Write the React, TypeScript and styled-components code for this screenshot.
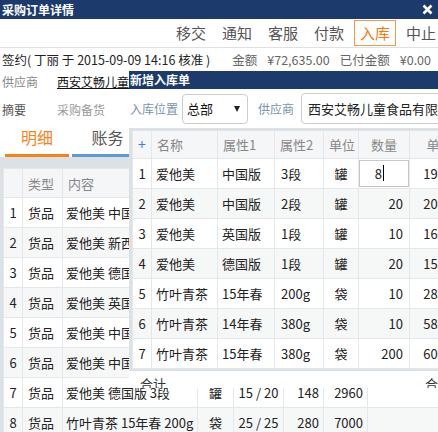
import styled, { createGlobalStyle } from 'styled-components'

const navy = '#1c3b6c'
const orange = '#f2851a'
const blue = '#5b9bd5'
const frame = '#dce1e6'
const grid = '#e4e8eb'

const GlobalStyle = createGlobalStyle`
	html, body {
		margin: 0;
		padding: 0;
	}
	body {
		font-family: 'Noto Sans CJK SC', sans-serif;
		font-size: 13px;
		color: #222;
		background: #fff;
		overflow: hidden;
	}
	* {
		box-sizing: border-box;
	}
`

const orderRows = [
	{ type: '货品', content: '爱他美 中国版 3段', unit: '罐', qty: '8 / 20', price: '198', sum: '3960' },
	{ type: '货品', content: '爱他美 新西兰版 2段', unit: '罐', qty: '20 / 20', price: '208', sum: '4160' },
	{ type: '货品', content: '爱他美 德国版 1段', unit: '罐', qty: '10 / 20', price: '168', sum: '3360' },
	{ type: '货品', content: '爱他美 英国版 1段', unit: '罐', qty: '20 / 20', price: '158', sum: '3160' },
	{ type: '货品', content: '爱他美 中国版 2段', unit: '罐', qty: '10 / 30', price: '208', sum: '6240' },
	{ type: '货品', content: '爱他美 中国版 1段', unit: '罐', qty: '10 / 20', price: '188', sum: '3760' },
	{ type: '货品', content: '爱他美 德国版 3段', unit: '罐', qty: '15 / 20', price: '148', sum: '2960' },
	{ type: '货品', content: '竹叶青茶 15年春 200g', unit: '袋', qty: '25 / 25', price: '280', sum: '7000' },
]

const stockRows = [
	{ name: '爱他美', attr1: '中国版', attr2: '3段', unit: '罐', qty: '8', price: '198.00' },
	{ name: '爱他美', attr1: '中国版', attr2: '2段', unit: '罐', qty: '20', price: '208.00' },
	{ name: '爱他美', attr1: '英国版', attr2: '1段', unit: '罐', qty: '10', price: '168.00' },
	{ name: '爱他美', attr1: '德国版', attr2: '1段', unit: '罐', qty: '20', price: '158.00' },
	{ name: '竹叶青茶', attr1: '15年春', attr2: '200g', unit: '袋', qty: '10', price: '280.00' },
	{ name: '竹叶青茶', attr1: '14年春', attr2: '380g', unit: '袋', qty: '10', price: '580.00' },
	{ name: '竹叶青茶', attr1: '15年春', attr2: '380g', unit: '袋', qty: '200', price: '600.00' },
]

export default function App() {
	return (
		<Page>
			<GlobalStyle />
			<TitleBar>
				<span>采购订单详情</span>
				<svg width='11' height='11' viewBox='0 0 11 11'>
					<path d='M1.5 1.5 L9.5 9.5 M9.5 1.5 L1.5 9.5' stroke='#fff' strokeWidth='2.6' />
				</svg>
			</TitleBar>
			<Toolbar>
				<ToolButton>移交</ToolButton>
				<ToolButton>通知</ToolButton>
				<ToolButton>客服</ToolButton>
				<ToolButton>付款</ToolButton>
				<ToolButton $active>入库</ToolButton>
				<ToolButton>中止</ToolButton>
			</Toolbar>
			<InfoRow>
				<span>签约( 丁丽 于 2015-09-09 14:16 核准 )</span>
				<Money>
					<span>金额</span>
					<span>¥72,635.00</span>
					<span>已付金额</span>
					<span>¥0.00</span>
				</Money>
			</InfoRow>
			<Fields>
				<FieldRow>
					<FieldLabel>供应商</FieldLabel>
					<SupplierLink>西安艾畅儿童食品有限公司</SupplierLink>
				</FieldRow>
				<FieldRow>
					<FieldLabel $dark>摘要</FieldLabel>
					<FieldValue>采购备货</FieldValue>
				</FieldRow>
			</Fields>
			<Tabs>
				<Tab $w={64} $color={orange} $active>明细</Tab>
				<Tab $w={71} $color={blue}>账务</Tab>
			</Tabs>
			<TableWrap>
				<OrderTable>
					<colgroup>
						<col width='19' />
						<col width='40' />
						<col width='135' />
						<col width='36' />
						<col width='50' />
						<col width='40' />
						<col width='44' />
						<col width='200' />
					</colgroup>
					<thead>
						<tr>
							<Th />
							<Th>类型</Th>
							<Th>内容</Th>
							<Th>单位</Th>
							<Th>数量</Th>
							<Th>单价</Th>
							<Th>金额</Th>
							<Th>备注</Th>
						</tr>
					</thead>
					<tbody>
						{orderRows.map((r, i) => (
							<BodyRow key={i}>
								<Td $align='center'>{i + 1}</Td>
								<Td $pad={5}>{r.type}</Td>
								<Td $pad={3}>{r.content}</Td>
								<Td $align='center'>{r.unit}</Td>
								<Td $align='center'>{r.qty}</Td>
								<Td $align='right'>{r.price}</Td>
								<Td $align='right'>{r.sum}</Td>
								<Td />
							</BodyRow>
						))}
					</tbody>
				</OrderTable>
			</TableWrap>

			<Dialog>
				<DialogTitle>新增入库单</DialogTitle>
				<FormRow>
					<FormLabel>入库位置</FormLabel>
					<SelectBox>
						<span>总部</span>
						<Caret />
					</SelectBox>
					<FormLabel $gap>供应商</FormLabel>
					<TextBox>西安艾畅儿童食品有限公司</TextBox>
				</FormRow>
				<ItemWrap>
					<ItemTable>
						<colgroup>
							<col width='19' />
							<col width='66' />
							<col width='57' />
							<col width='49' />
							<col width='35' />
							<col width='51' />
							<col width='60' />
							<col width='80' />
						</colgroup>
						<thead>
							<tr>
								<ItemTh $align='center'>
									<Plus>+</Plus>
								</ItemTh>
								<ItemTh>名称</ItemTh>
								<ItemTh>属性1</ItemTh>
								<ItemTh>属性2</ItemTh>
								<ItemTh $align='center'>单位</ItemTh>
								<ItemTh $align='center'>数量</ItemTh>
								<ItemTh $align='center'>单价</ItemTh>
								<ItemTh $align='center'>金额</ItemTh>
							</tr>
						</thead>
						<tbody>
							{stockRows.map((r, i) => (
								<ItemRow key={i}>
									<ItemTd $align='center'>{i + 1}</ItemTd>
									<ItemTd>{r.name}</ItemTd>
									<ItemTd>{r.attr1}</ItemTd>
									<ItemTd $pad={6}>{r.attr2}</ItemTd>
									<ItemTd $align='center'>{r.unit}</ItemTd>
									{i === 0 ? (
										<QtyCell>
											<QtyInput>
												{r.qty}
												<TextCaret />
											</QtyInput>
										</QtyCell>
									) : (
										<ItemTd $align='right' $pad={6}>
											{r.qty}
										</ItemTd>
									)}
									<ItemTd $align='right' $pad={6}>
										{r.price}
									</ItemTd>
									<ItemTd />
								</ItemRow>
							))}
						</tbody>
					</ItemTable>
				</ItemWrap>
				<DialogFooter>
					<span>合计</span>
					<span>合计金额</span>
				</DialogFooter>
			</Dialog>
		</Page>
	)
}

const Page = styled.div`
	position: relative;
	width: 438px;
	height: 432px;
	overflow: hidden;
	display: flex;
	flex-direction: column;
`

const TitleBar = styled.div`
	flex-shrink: 0;
	height: 19px;
	padding: 0 5px 0 2px;
	display: flex;
	align-items: center;
	justify-content: space-between;
	background: ${navy};
	color: #fff;
	font-size: 12px;
	font-weight: 700;
`

const Toolbar = styled.div`
	flex-shrink: 0;
	height: 29px;
	padding-top: 1px;
	margin-right: -4px;
	display: flex;
	justify-content: flex-end;
	align-items: flex-start;
	gap: 4px;
	border-bottom: 1px solid #e1e1e1;
`

const ToolButton = styled.button<{ $active?: boolean }>`
	height: 26px;
	padding: 0 5px;
	border: 1px solid ${(p) => (p.$active ? '#f39a45' : 'transparent')};
	background: #fff;
	font-family: inherit;
	font-size: 15px;
	line-height: 24px;
	color: ${(p) => (p.$active ? '#f07a15' : '#555')};
`

const InfoRow = styled.div`
	flex-shrink: 0;
	height: 22px;
	padding: 0 7px 0 2px;
	display: flex;
	align-items: center;
	justify-content: space-between;
	font-size: 12.5px;
	color: #222;
	white-space: nowrap;
`

const Money = styled.div`
	display: flex;
	gap: 10px;
	font-size: 12.5px;
	color: #666;
`

const Fields = styled.div`
	flex-shrink: 0;
	display: flex;
	flex-direction: column;
	gap: 6px;
`

const FieldRow = styled.div`
	height: 22px;
	padding-left: 2px;
	display: grid;
	grid-template-columns: 55px auto;
	align-items: center;
	font-size: 12px;
	white-space: nowrap;
`

const FieldLabel = styled.span<{ $dark?: boolean }>`
	color: ${(p) => (p.$dark ? '#555' : '#888')};
`

const SupplierLink = styled.a`
	color: #111;
	text-decoration: underline;
`

const FieldValue = styled.span`
	color: #999;
`

const Tabs = styled.div`
	flex-shrink: 0;
	height: 37px;
	padding-left: 5px;
	display: flex;
	gap: 3px;
`

const Tab = styled.div<{ $w: number; $color: string; $active?: boolean }>`
	width: ${(p) => p.$w}px;
	display: flex;
	align-items: center;
	justify-content: center;
	border-bottom: 3px solid ${(p) => p.$color};
	font-size: 16px;
	color: ${(p) => (p.$active ? orange : '#555')};
`

const TableWrap = styled.div`
	flex: 1;
	padding: 11px 0 0 3px;
	background: ${frame};
`

const OrderTable = styled.table`
	width: 564px;
	table-layout: fixed;
	border-collapse: collapse;
	background: #fff;
	font-size: 13px;
`

const Th = styled.th`
	height: 29px;
	padding: 0 5px;
	border: 1px solid ${grid};
	background: #f5f6f7;
	color: #888;
	font-weight: 400;
	text-align: left;
	white-space: nowrap;
	overflow: hidden;
`

const BodyRow = styled.tr`
	height: 30px;
	&:nth-child(even) {
		background: #f6f7f7;
	}
`

const Td = styled.td<{ $align?: string; $pad?: number }>`
	padding: 0 ${(p) => p.$pad ?? 4}px;
	border: 1px solid ${grid};
	text-align: ${(p) => p.$align ?? 'left'};
	white-space: nowrap;
	overflow: hidden;
	color: #222;
`

const Dialog = styled.div`
	position: absolute;
	top: 71px;
	left: 129px;
	width: 430px;
	height: 317px;
	overflow: hidden;
	display: flex;
	flex-direction: column;
	background: #fff;
`

const DialogTitle = styled.div`
	flex-shrink: 0;
	height: 18px;
	padding-left: 1px;
	background: ${navy};
	color: #fff;
	font-size: 12px;
	font-weight: 700;
	line-height: 18px;
`

const FormRow = styled.div`
	flex-shrink: 0;
	height: 39px;
	padding: 4px 0 4px 1px;
	display: flex;
	align-items: center;
	white-space: nowrap;
`

const FormLabel = styled.span<{ $gap?: boolean }>`
	margin: 0 ${(p) => (p.$gap ? 7 : 4)}px 0 ${(p) => (p.$gap ? 10 : 0)}px;
	font-size: 12px;
	color: #7b93ab;
`

const SelectBox = styled.div`
	width: 66px;
	height: 30px;
	padding: 0 7px 0 4px;
	display: flex;
	align-items: center;
	justify-content: space-between;
	border: 1px solid #ccc;
	border-radius: 4px;
	font-size: 13px;
	color: #111;
`

const Caret = styled.span`
	width: 0;
	height: 0;
	border-left: 3px solid transparent;
	border-right: 3px solid transparent;
	border-top: 6px solid #222;
`

const TextBox = styled.div`
	flex: 1;
	height: 31px;
	padding-left: 6px;
	display: flex;
	align-items: center;
	overflow: hidden;
	border: 1px solid #ccc;
	border-radius: 4px;
	font-size: 13px;
	color: #222;
`

const ItemWrap = styled.div`
	flex-shrink: 0;
	border-top: 3px solid ${frame};
	border-left: 3px solid ${frame};
	border-bottom: 2px solid ${frame};
`

const ItemTable = styled.table`
	width: 417px;
	table-layout: fixed;
	border-collapse: collapse;
	font-size: 13px;
`

const ItemTh = styled.th<{ $align?: string }>`
	height: 27px;
	padding: 0 5px;
	border: 1px solid ${grid};
	border-top: none;
	background: #f5f6f7;
	color: #888;
	font-weight: 400;
	text-align: ${(p) => p.$align ?? 'left'};
	white-space: nowrap;
	overflow: hidden;
`

const Plus = styled.span`
	color: #3d7fcf;
	font-size: 14px;
`

const ItemRow = styled.tr`
	height: 30px;
	&:nth-child(even) {
		background: #f6f7f7;
	}
`

const ItemTd = styled.td<{ $align?: string; $pad?: number }>`
	padding: 0 ${(p) => p.$pad ?? 4}px;
	border: 1px solid ${grid};
	text-align: ${(p) => p.$align ?? 'left'};
	white-space: nowrap;
	overflow: hidden;
	color: #222;
`

const QtyCell = styled.td`
	padding: 1px 0;
	border: 1px solid ${grid};
`

const QtyInput = styled.div`
	height: 27px;
	padding-right: 24px;
	display: flex;
	align-items: center;
	justify-content: flex-end;
	border: 1px solid #c8c8c8;
	background: #fff;
	color: #222;
`

const TextCaret = styled.span`
	width: 1px;
	height: 16px;
	margin-left: 1px;
	background: #000;
`

const DialogFooter = styled.div`
	padding: 3px 0 0 11px;
	display: grid;
	grid-template-columns: 285px auto;
	font-size: 13px;
	color: #333;
	white-space: nowrap;
`
